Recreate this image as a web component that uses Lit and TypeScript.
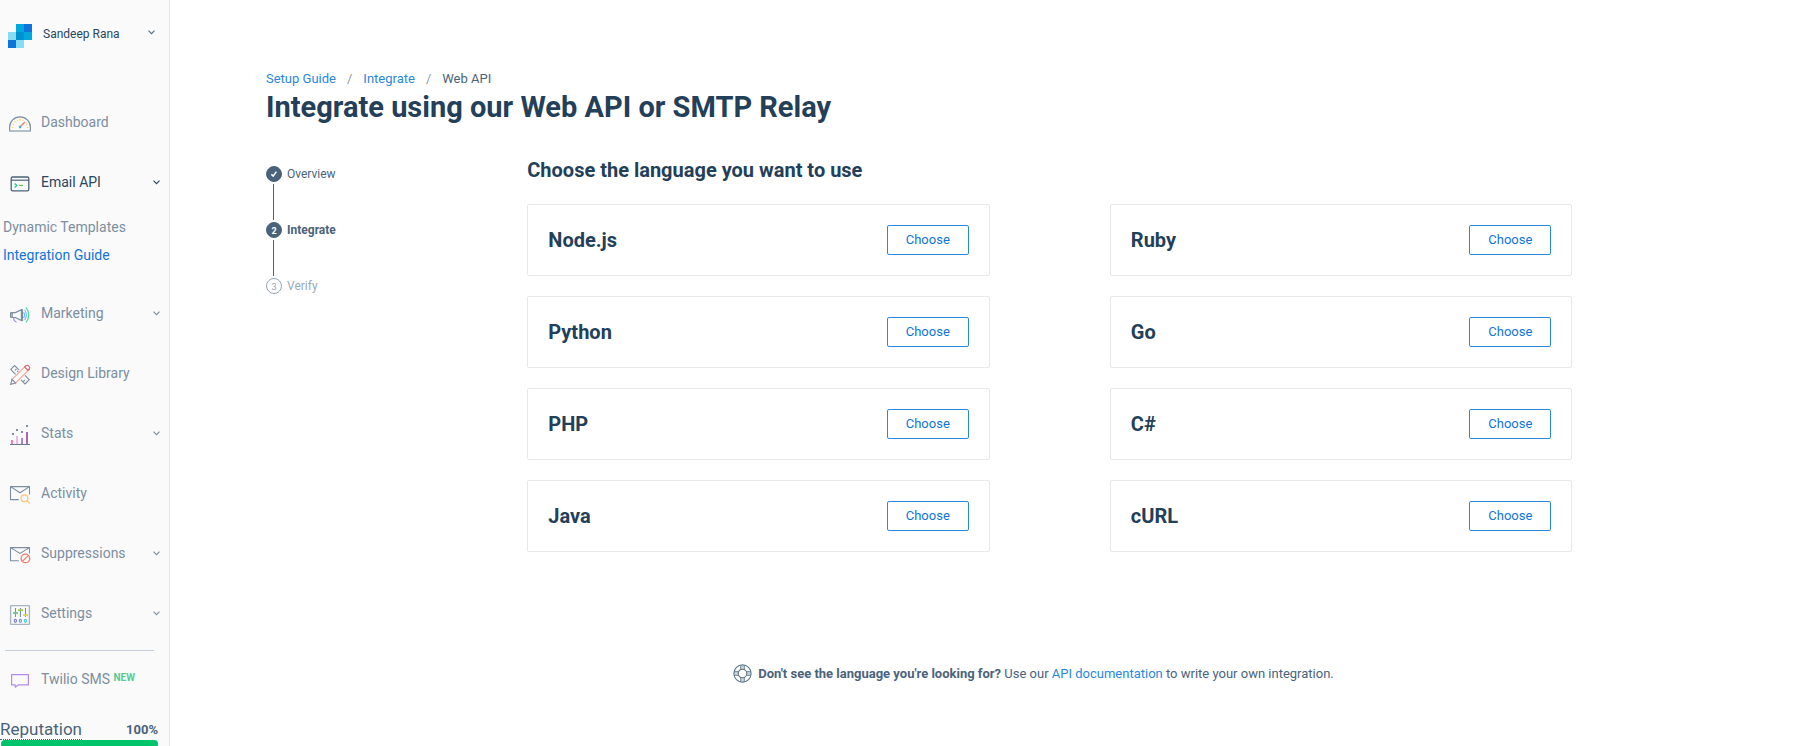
import { LitElement, html, css, svg, nothing, TemplateResult } from "lit";
import { customElement, property } from "lit/decorators.js";
import { classMap } from "lit/directives/class-map.js";

const slate = "#7c8ea0";

const icons: Record<string, TemplateResult> = {
  dashboard: svg`
    <path d="M1.6 21V17.2a10.4 10.4 0 0 1 20.8 0V21z" fill="none" stroke=${slate} stroke-width="1.2"/>
    <path d="M1.6 21.2h20.8" stroke="#b3bfca" stroke-width="1.6"/>
    <g fill="#ffd675"><circle cx="4.6" cy="17.5" r=".8"/><circle cx="5.2" cy="14.4" r=".8"/><circle cx="7" cy="11.7" r=".8"/><circle cx="9.4" cy="10.2" r=".8"/><circle cx="12" cy="9.6" r="1"/><circle cx="14.9" cy="10.2" r=".8"/><circle cx="18.9" cy="14.4" r=".8"/><circle cx="19.5" cy="17.5" r=".8"/></g>
    <path d="M12.5 16.5l4.4-4.4" stroke="#f2796b" stroke-width="1.4"/>
    <circle cx="12" cy="17.1" r="1.3" fill="#5aa5ea"/>`,
  terminal: svg`
    <rect x="3.2" y="7" width="17.6" height="13.8" rx="1.4" fill="none" stroke="#4a637b" stroke-width="1.3"/>
    <path d="M3.2 10.2h17.6" stroke="#4a637b" stroke-width="1.2"/>
    <path d="M6.6 13.4l2.2 2-2.2 2" fill="none" stroke="#17cf97" stroke-width="1.3"/>
    <path d="M11 15.4h4" stroke="#6cc04a" stroke-width="1.2"/>`,
  megaphone: svg`
    <path d="M5.6 16.6l.6 2.8 2.4 2" fill="none" stroke="#a58be0" stroke-width="1.2"/>
    <path d="M4.2 11.6h3.2l6-2.9v10.8l-6-3H4.2zM4.2 11.9H2.6v4.2h1.6M2 11.9h1" fill="none" stroke=${slate} stroke-width="1.2"/>
    <path d="M14.4 8.2v11.8" stroke=${slate} stroke-width="1.3"/>
    <path d="M15.6 11.2q2 2.8 0 5.8M16.6 8.8q3.6 5.2 0 10.4" fill="none" stroke="#69c3f0" stroke-width="1.1"/>
    <path d="M18 6.4q5.6 7.6 0 15" fill="none" stroke="#57d89c" stroke-width="1.2"/>`,
  design: svg`
    <path d="M2.7 8.4L6.6 4.6l4.6 4.6M2.7 8.4l4.9 4.9M13 18.9l4 4 4.3-4.1-4.4-4.4M7 9.4l1.4-1.4M9.2 11l1-1M15.4 20.4l1.4-1.4M18 22l1-1" fill="none" stroke=${slate} stroke-width="1.1"/>
    <path d="M4 18.6L17.4 5.2l3.5 3.5L7.4 22.1z" fill="#fafafa" stroke="#f7a99a" stroke-width="1.2"/>
    <path d="M16.6 6l1.3-1.3c2-1.4 4.8 1.3 3.4 3.3L20 9.4z" fill="#fafafa" stroke="#e0636b" stroke-width="1.2"/>
    <path d="M4 18.4L2.6 23.4l5-1.4z" fill="#fafafa" stroke=${slate} stroke-width="1.1"/>`,
  stats: svg`
    <path d="M3 19h2v4H3z" fill="#ff7bac"/><path d="M8 15h2v8H8z" fill="#efb6e6"/>
    <path d="M13 17h2v6h-2z" fill="#a582f5"/><path d="M18 11h2v12h-2z" fill="#a468b8"/>
    <path d="M2 23.5h20" stroke="#6a7d90" stroke-width="1"/>
    <g fill="#7c8ea0"><path d="M4 12h2v2H4zM8 8h2v2H8zM13 10h2v2h-2zM18 4h2v2h-2z"/></g>`,
  activity: svg`
    <path d="M10.8 18.6H2.5V5.6h19v8M2.5 5.6L12 11.8l9.5-6.2" fill="none" stroke=${slate} stroke-width="1.1"/>
    <circle cx="16.4" cy="17.3" r="3.4" fill="#fafafa" stroke="#ffc078" stroke-width="1.2"/>
    <path d="M18.8 19.6l3 3" stroke="#ffc078" stroke-width="1.3"/>`,
  suppressions: svg`
    <path d="M10.8 19.8H2.5V6.6h19v6M2.5 6.6L12 12.4l9.5-5.8" fill="none" stroke=${slate} stroke-width="1.1"/>
    <circle cx="17.4" cy="17.4" r="4.3" fill="#fafafa" stroke="#ee7d6c" stroke-width="1.3"/>
    <path d="M14.4 20.4l6-6" stroke="#ee7d6c" stroke-width="1.3"/>`,
  settings: svg`
    <rect x="2.6" y="4.6" width="18.8" height="18.8" rx=".6" fill="none" stroke="#a9b6c2" stroke-width="1.4"/>
    <path d="M7.5 7v9M12.5 7v9M17.5 7v9" stroke=${slate} stroke-width="1.1"/>
    <path d="M5 12h5" stroke="#6cc98a" stroke-width="1.8"/>
    <path d="M10 9.2h5" stroke="#9ccc50" stroke-width="1.8"/>
    <path d="M15 14h5" stroke="#d4dc4a" stroke-width="1.8"/>
    <g fill="none" stroke-width="1.2"><ellipse cx="7.4" cy="19.8" rx="1.1" ry="1.5" stroke="#7f7fd6"/><ellipse cx="12.4" cy="19.8" rx="1.1" ry="1.5" stroke="#5aa5ea"/><ellipse cx="17.4" cy="19.8" rx="1.1" ry="1.5" stroke="#4fc8e0"/></g>`,
  chat: svg`
    <path d="M3.6 7.6h16.8v10.2H10.6L7.2 20.2v-2.4H3.6z" fill="none" stroke="#b48be8" stroke-width="1.2" stroke-linejoin="round"/>`,
};

const chevron = html`<svg class="chevron" width="7" height="5" viewBox="0 0 7 5" aria-hidden="true">
  <path d="M.5 .7l3 3 3-3" fill="none" stroke="currentColor" stroke-width="1.1"/>
</svg>`;

interface NavItem {
  label: string;
  icon: string;
  menu?: boolean;
  active?: boolean;
  children?: { label: string; current?: boolean }[];
}

const navItems: NavItem[] = [
  { label: "Dashboard", icon: "dashboard" },
  {
    label: "Email API",
    icon: "terminal",
    menu: true,
    active: true,
    children: [{ label: "Dynamic Templates" }, { label: "Integration Guide", current: true }],
  },
  { label: "Marketing", icon: "megaphone", menu: true },
  { label: "Design Library", icon: "design" },
  { label: "Stats", icon: "stats", menu: true },
  { label: "Activity", icon: "activity" },
  { label: "Suppressions", icon: "suppressions", menu: true },
  { label: "Settings", icon: "settings", menu: true },
];

@customElement("side-nav")
export class SideNav extends LitElement {
  @property({ type: Number }) reputation = 100;

  static styles = css`
    :host {
      display: block;
      box-sizing: border-box;
      background: #fafafa;
      border-right: 1px solid #e6e7e9;
      color: #7c8ea0;
      overflow: hidden;
    }
    a { color: inherit; text-decoration: none; }
    button {
      font: inherit;
      color: inherit;
      background: none;
      border: 0;
      cursor: pointer;
      text-align: left;
    }
    svg { flex: none; display: block; }
    .account {
      display: flex;
      align-items: flex-start;
      width: 100%;
      height: 92px;
      padding: 24px 14px 0 8px;
      color: #294661;
      font-size: 12px;
      line-height: 20px;
    }
    .account .name { flex: 1; padding-left: 11px; }
    .account .chevron { margin-top: 6px; color: #546b81; }
    ul { list-style: none; margin: 0; padding: 0; }
    .item {
      box-sizing: border-box;
      display: flex;
      align-items: center;
      gap: 9px;
      width: 100%;
      height: 60px;
      padding: 0 9px 0 8px;
      font-size: 14px;
    }
    .item .label { flex: 1; }
    .item.active { color: #294661; }
    .submenu { padding: 1px 0 14px 3px; font-size: 14px; line-height: 28px; }
    .submenu .current { color: #1174db; }
    .divider { border: 0; border-top: 1px solid #c4cfd9; margin: 7px 15px 0 5px; }
    .item.sms { height: 56px; }
    .new { color: #55cc94; font-size: 10px; font-weight: 700; line-height: 10px; vertical-align: 3px; }
    .reputation {
      display: flex;
      justify-content: space-between;
      align-items: center;
      padding: 12px 11px 0 0;
      color: #4a637b;
    }
    .reputation .title { font-size: 17px; line-height: 20px; border-bottom: 1px dotted #4a637b; }
    .reputation .score { font-size: 13px; font-weight: 700; }
    .meter { height: 8px; margin: 0 11px 0 1px; border-radius: 4px; background: #e6e7e9; }
    .fill { height: 100%; border-radius: 4px; background: #00c46a; }
  `;

  private renderItem(item: NavItem) {
    const body = html`
      <svg width="24" height="24" viewBox="0 0 24 24" aria-hidden="true">${icons[item.icon]}</svg>
      <span class="label">${item.label}</span>
      ${item.menu ? chevron : nothing}`;
    const classes = classMap({ item: true, active: !!item.active });
    return html`<li>
      ${item.menu
        ? html`<button class=${classes} aria-expanded=${item.children ? "true" : "false"}>${body}</button>`
        : html`<a class=${classes} href="#">${body}</a>`}
      ${item.children
        ? html`<ul class="submenu">
            ${item.children.map(
              (c) => html`<li><a href="#" class=${classMap({ current: !!c.current })}>${c.label}</a></li>`
            )}
          </ul>`
        : nothing}
    </li>`;
  }

  render() {
    return html`
      <button class="account">
        <svg width="24" height="24" viewBox="0 0 24 24" shape-rendering="crispEdges" aria-hidden="true">
          <path d="M8 0h8v8H8zM16 8h8v8h-8z" fill="#00a9dd"/>
          <path d="M16 0h8v8h-8zM0 16h8v8H0z" fill="#0f73dc"/>
          <path d="M0 8h8v8H0zM8 16h8v8H8z" fill="#86dcf2"/>
          <path d="M8 8h8v8H8z" fill="#0090d2"/>
        </svg>
        <span class="name">Sandeep Rana</span>
        ${chevron}
      </button>
      <nav>
        <ul>${navItems.map((i) => this.renderItem(i))}</ul>
        <hr class="divider" />
        <a class="item sms" href="#">
          <svg width="24" height="24" viewBox="0 0 24 24" aria-hidden="true">${icons.chat}</svg>
          <span class="label">Twilio SMS <span class="new">NEW</span></span>
        </a>
      </nav>
      <div class="reputation">
        <a class="title" href="#">Reputation</a>
        <span class="score">${this.reputation}%</span>
      </div>
      <div class="meter"><div class="fill" style="width:${this.reputation}%"></div></div>
    `;
  }
}

@customElement("step-list")
export class StepList extends LitElement {
  static styles = css`
    :host { display: block; padding-top: 8px; }
    ol { list-style: none; margin: 0; padding: 0; }
    li { color: #4a637b; font-size: 12px; line-height: 16px; }
    .row { display: flex; align-items: center; gap: 5px; }
    .badge {
      box-sizing: border-box;
      display: grid;
      place-items: center;
      width: 16px;
      height: 16px;
      border-radius: 50%;
      border: 1px solid #4a637b;
      background: #4a637b;
      color: #fff;
      font-size: 9px;
      font-weight: 700;
    }
    .line { width: 1px; height: 36px; margin: 2px 7px; background: #4a637b; }
    .current { font-weight: 700; }
    .pending { color: #9aa9b7; }
    .pending .badge { background: #fff; border-color: #94a3b2; color: #94a3b2; font-weight: 400; }
  `;

  render() {
    return html`<ol>
      <li>
        <div class="row">
          <span class="badge"><svg width="8" height="8" viewBox="0 0 8 8" role="img" aria-label="Done"><path d="M1.4 4.4l1.8 1.8L6.4 1.6" fill="none" stroke="#fff" stroke-width="1.5"/></svg></span>
          <span>Overview</span>
        </div>
        <div class="line"></div>
      </li>
      <li>
        <div class="row current" aria-current="step"><span class="badge">2</span><span>Integrate</span></div>
        <div class="line"></div>
      </li>
      <li>
        <div class="row pending"><span class="badge">3</span><span>Verify</span></div>
      </li>
    </ol>`;
  }
}

@customElement("language-card")
export class LanguageCard extends LitElement {
  @property() name = "";

  static styles = css`
    :host {
      box-sizing: border-box;
      display: flex;
      align-items: center;
      justify-content: space-between;
      padding: 20px;
      border: 1px solid #e6e8eb;
      border-radius: 2px;
      background: #fff;
    }
    h3 { margin: 0; color: #233f59; font-size: 20px; line-height: 28px; font-weight: 700; }
    button {
      padding: 0 18px;
      border: 1px solid #2a87e0;
      border-radius: 2px;
      background: #fff;
      color: #1174db;
      font: inherit;
      font-size: 13px;
      line-height: 28px;
      cursor: pointer;
    }
  `;

  render() {
    return html`<h3 id="name">${this.name}</h3>
      <button aria-describedby="name">Choose</button>`;
  }
}

const languages = ["Node.js", "Ruby", "Python", "Go", "PHP", "C#", "Java", "cURL"];

@customElement("app-root")
export class AppRoot extends LitElement {
  static styles = css`
    :host {
      display: grid;
      grid-template-columns: 170px minmax(0, 1fr);
      height: 100vh;
      overflow: hidden;
      background: #fff;
      color: #4a637b;
      font-family: Roboto, "Liberation Sans", sans-serif;
      font-size: 13px;
    }
    a { color: #2a87e0; text-decoration: none; }
    main { padding: 70px 0 0 96px; overflow: auto; }
    .crumbs ol { display: flex; list-style: none; margin: 0; padding: 0; line-height: 18px; }
    .crumbs li + li::before { content: "/"; padding: 0 11px; color: #8a97a4; }
    h1 { margin: 1px 0 0; color: #233f59; font-size: 29px; line-height: 36px; font-weight: 700; }
    .content { display: grid; grid-template-columns: 8fr 32fr 7fr; margin-top: 33px; }
    h2 { margin: 0 0 22px; color: #233f59; font-size: 20px; line-height: 24px; font-weight: 700; }
    .cards { display: grid; grid-template-columns: 1fr 1fr; gap: 20px 120px; }
    .help {
      display: flex;
      justify-content: center;
      align-items: center;
      gap: 6px;
      margin: 112px 0 0;
      line-height: 18px;
    }
  `;

  render() {
    return html`
      <side-nav></side-nav>
      <main>
        <nav class="crumbs" aria-label="Breadcrumb">
          <ol>
            <li><a href="#">Setup Guide</a></li>
            <li><a href="#">Integrate</a></li>
            <li aria-current="page">Web API</li>
          </ol>
        </nav>
        <h1>Integrate using our Web API or SMTP Relay</h1>
        <div class="content">
          <step-list></step-list>
          <section>
            <h2>Choose the language you want to use</h2>
            <div class="cards">
              ${languages.map((l) => html`<language-card .name=${l}></language-card>`)}
            </div>
          </section>
        </div>
        <div class="help">
          <svg width="19" height="19" viewBox="0 0 19 19" aria-hidden="true">
            <path d="M7.6 1.4h3.8v4.2H7.6zM7.6 13.4h3.8v4.2H7.6zM1.4 7.6h4.2v3.8H1.4zM13.4 7.6h4.2v3.8h-4.2z" fill="#c9d1d9"/>
            <g fill="none" stroke="#5f7589" stroke-width="1.1">
              <circle cx="9.5" cy="9.5" r="8.6"/><circle cx="9.5" cy="9.5" r="4.3"/>
              <path d="M7.6 1.4v4.2M11.4 1.4v4.2M7.6 13.4v4.2M11.4 13.4v4.2M1.4 7.6h4.2M1.4 11.4h4.2M13.4 7.6h4.2M13.4 11.4h4.2" stroke-width=".8"/>
            </g>
          </svg>
          <span><strong>Don't see the language you're looking for?</strong> Use our <a href="#">API documentation</a> to write your own integration.</span>
        </div>
      </main>
    `;
  }
}
